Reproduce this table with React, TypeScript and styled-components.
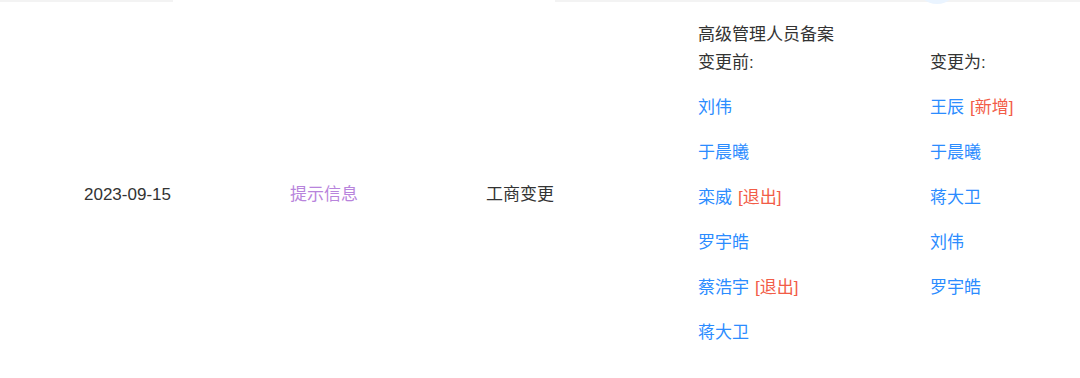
import React from 'react'
import styled, { createGlobalStyle } from 'styled-components'

const GlobalStyle = createGlobalStyle`
  html, body {
    margin: 0;
    padding: 0;
    background: #fff;
    overflow: hidden;
  }
  body {
    font-family: 'Liberation Sans', 'Noto Sans CJK SC', sans-serif;
    color: #333;
  }
`

const Page = styled.div`
  position: relative;
  width: 1080px;
  height: 378px;
  overflow: hidden;
`

const TopStrip = styled.div`
  display: flex;
  height: 2px;
`

const StripSegment = styled.div<{ w: number; shade?: boolean }>`
  width: ${({ w }) => w}px;
  flex: ${({ w }) => (w ? '0 0 auto' : '1')};
  background: ${({ shade }) => (shade ? '#f3f3f3' : 'transparent')};
`

const Bubble = styled.div`
  position: absolute;
  top: -36px;
  left: 916px;
  width: 42px;
  height: 40px;
  border-radius: 50%;
  background: #eaf4ff;
`

const Row = styled.div`
  display: grid;
  grid-template-columns: 206px 196px 212px 1fr;
  align-items: center;
  padding-left: 84px;
  height: 386px;
  font-size: 17px;
`

const Cell = styled.div<{ tone?: 'purple' }>`
  line-height: 24px;
  color: ${({ tone }) => (tone === 'purple' ? '#b884dc' : '#333')};
  align-self: center;
`

const Detail = styled.div`
  align-self: start;
  padding-top: 19px;
`

const Title = styled.div`
  line-height: 28px;
  color: #333;
`

const Columns = styled.div`
  display: grid;
  grid-template-columns: 232px 1fr;
`

const Column = styled.div`
  display: flex;
  flex-direction: column;
`

const Label = styled.div`
  line-height: 28px;
  color: #333;
`

const Name = styled.div`
  margin-top: 17px;
  line-height: 28px;
  color: #2b8cff;
`

const Tag = styled.span`
  color: #f25c47;
  margin-left: 6px;
`

type Person = { name: string; tag?: string }

const before: Person[] = [
  { name: '刘伟' },
  { name: '于晨曦' },
  { name: '栾威', tag: '[退出]' },
  { name: '罗宇皓' },
  { name: '蔡浩宇', tag: '[退出]' },
  { name: '蒋大卫' },
]

const after: Person[] = [
  { name: '王辰', tag: '[新增]' },
  { name: '于晨曦' },
  { name: '蒋大卫' },
  { name: '刘伟' },
  { name: '罗宇皓' },
]

const PersonList: React.FC<{ label: string; people: Person[] }> = ({ label, people }) => (
  <Column>
    <Label>{label}</Label>
    {people.map((p, i) => (
      <Name key={i}>
        {p.name}
        {p.tag && <Tag>{p.tag}</Tag>}
      </Name>
    ))}
  </Column>
)

export default function App() {
  return (
    <>
      <GlobalStyle />
      <Page>
        <TopStrip>
          <StripSegment w={173} shade />
          <StripSegment w={382} />
          <StripSegment w={0} shade />
        </TopStrip>
        <Bubble />
        <Row>
          <Cell>2023-09-15</Cell>
          <Cell tone="purple">提示信息</Cell>
          <Cell>工商变更</Cell>
          <Detail>
            <Title>高级管理人员备案</Title>
            <Columns>
              <PersonList label="变更前:" people={before} />
              <PersonList label="变更为:" people={after} />
            </Columns>
          </Detail>
        </Row>
      </Page>
    </>
  )
}
